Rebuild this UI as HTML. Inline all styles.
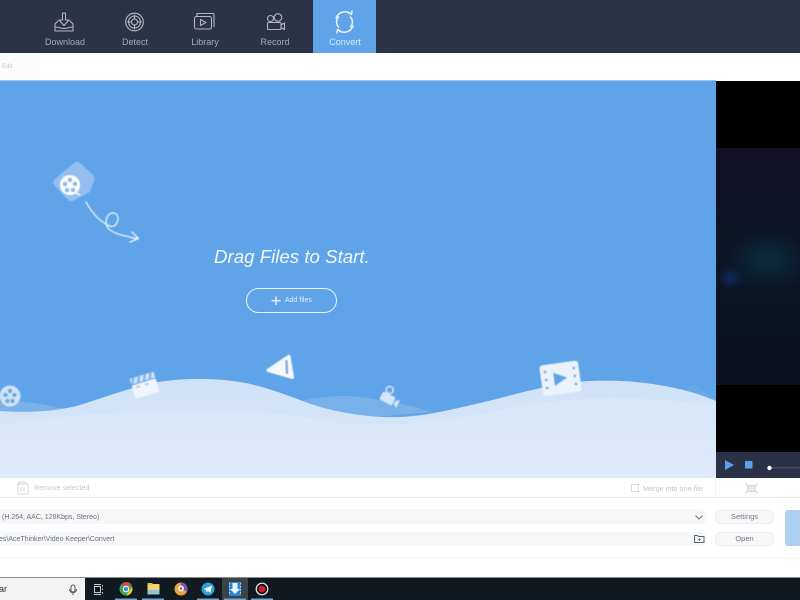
<!DOCTYPE html>
<html>
<head>
<meta charset="utf-8">
<style>
html,body{margin:0;padding:0;width:800px;height:600px;overflow:hidden;background:#fff;font-family:"Liberation Sans",sans-serif}
div{position:absolute;box-sizing:border-box}
.t{white-space:nowrap}
.nav{top:37px;font-size:9px;color:#a6abb8;text-align:center;width:70px;line-height:11px}
svg{position:absolute;left:0;top:0}
</style>
</head>
<body>
<div style="left:0;top:0;width:800px;height:53px;background:#2c3247"></div>
<div style="left:313px;top:0;width:63px;height:53px;background:#5fa4e8"></div>

<div style="left:0;top:53px;width:800px;height:28px;background:#fff"></div>
<div style="left:0;top:53px;width:40px;height:26px;background:#fcfcfc"></div>

<div style="left:0;top:80px;width:716px;height:398px;background:#5fa4e8"></div>
<div style="left:0;top:80px;width:716px;height:1px;background:#9cc2e6"></div>

<div style="left:716px;top:81px;width:84px;height:371px;background:#000"></div>
<div style="left:716px;top:148px;width:84px;height:237px;background:radial-gradient(ellipse 14px 12px at 14px 130px,#102a55 0%,rgba(16,42,85,0) 100%),radial-gradient(ellipse 45px 32px at 52px 112px,#0a2c3e 0%,rgba(10,44,62,0) 100%),linear-gradient(#120f26,#0b1526 45%,#0b0f20)"></div>
<div style="left:716px;top:452px;width:84px;height:26px;background:#2b3146"></div>

<!-- bottom panel -->
<div style="left:0;top:478px;width:800px;height:100px;background:#fff"></div>
<div style="left:0;top:497px;width:800px;height:1px;background:#e9e9e9"></div>
<div style="left:715px;top:478px;width:1px;height:19px;background:#f3f3f3"></div>
<div style="left:0;top:557px;width:800px;height:1px;background:#f5f5f5"></div>
<div style="left:0;top:509px;width:707px;height:15px;background:#f5f7f8;border-radius:0 7px 7px 0"></div>
<div style="left:0;top:532px;width:707px;height:14px;background:#f5f7f8;border-radius:0 7px 7px 0"></div>

<!-- taskbar -->
<div style="left:0;top:577px;width:800px;height:1px;background:#8a8a8a"></div>
<div style="left:85px;top:578px;width:715px;height:22px;background:#111a20"></div>
<div style="left:0;top:578px;width:85px;height:22px;background:#f3f3f3"></div>

<div class="t nav" style="left:30px">Download</div>
<div class="t nav" style="left:100px">Detect</div>
<div class="t nav" style="left:170px">Library</div>
<div class="t nav" style="left:240px">Record</div>
<div class="t nav" style="left:310px;color:#d8e8f8">Convert</div>
<div class="t" style="left:2px;top:63px;font-size:6px;color:#c6c6c6;line-height:8px">Edit</div>

<svg width="800" height="600" viewBox="0 0 800 600">
  <defs>
    <linearGradient id="w" x1="0" y1="0" x2="0" y2="1"><stop offset="0" stop-color="#cfe2f8"/><stop offset="1" stop-color="#dbe9f9"/></linearGradient>
  </defs>
  <!-- nav icons -->
  <g fill="none" stroke="#b3b7c3" stroke-width="1.100" stroke-linecap="round" stroke-linejoin="round">
    <path d="M62.500 13h3v7h3.500l-5 5.500-5-5.500h3.500z"/>
    <path d="M58 21l-3 3v7h18v-7l-3-3M55 27c4 0 5 1.500 9 1.500s5-1.500 9-1.500"/>
    <circle cx="134.500" cy="22" r="8.800"/><circle cx="134.500" cy="22" r="6"/>
    <circle cx="134.500" cy="22" r="3"/>
    <path d="M134.500 15v4M134.500 25v4M127.500 22h4M137.500 22h4"/>
    <rect x="194.500" y="16.500" width="17" height="12.500" rx="2"/>
    <path d="M197 16v-2.500h16q1 0 1 1v12"/><path d="M200.500 19.500l5.500 3-5.500 3z"/>
    <circle cx="270.500" cy="18.500" r="3"/><circle cx="278" cy="17.500" r="3.800"/>
    <rect x="267.500" y="22.500" width="13.500" height="7" rx="1"/><path d="M281 25l3.500-2v6.500l-3.500-2"/>
  </g>
  <!-- convert -->
  <g fill="none" stroke="#e6f1fc" stroke-width="1.500" stroke-linecap="round" stroke-linejoin="round">
    <path d="M336 18a9.500 9.500 0 0 1 15-4"/><path d="M348.500 13l3 1.500 .5-3.500"/>
    <path d="M353 26a9.500 9.500 0 0 1-15 4"/><path d="M340.500 31l-3-1.500-.5 3.500"/>
    <path d="M338.500 17a7.500 7.500 0 0 0 0 10"/><path d="M350.500 27a7.500 7.500 0 0 0 0-10"/>
  </g>

  <!-- waves -->
  <path d="M0 403C15 401 28 402 40 404C52 406 62 409 75 410L0 414Z" fill="#78b1ea"/>
  <path d="M290 404C310 398 335 394 360 397C385 400 410 405 430 412L340 420Z" fill="#78b1ea"/>
  <path d="M680 392L694 384L708 394L716 400L700 400Z" fill="#66a8ea"/>
  <path d="M0 411C25 413 55 412 80 405C110 396 135 385 165 381C190 378 215 378 240 382C270 387 295 399 320 407C345 414 375 418 400 417C425 416 450 410 480 403C515 395 550 383 590 381C630 379 680 385 716 401V478H0Z" fill="url(#w)"/>
  <path d="M0 425C60 416 110 412 160 412C210 412 270 408 330 422C360 428 440 424 500 410C560 396 630 395 716 405V478H0Z" fill="#dfebfa" opacity=".45"/>

  <g style="filter:blur(.4px)">
  <!-- film icon top -->
  <path d="M54 180L74 163Q77 161 80 163L93 175Q95 178 94 181L90 192L73 201Q70 202 68 200L55 186Q52 183 54 180Z" fill="#92bfef"/>
  <circle cx="70" cy="185" r="10" fill="#fff"/>
  <g fill="#92bbe8"><circle cx="70" cy="180" r="2.300"/><circle cx="65" cy="184" r="2.300"/><circle cx="75" cy="184" r="2.300"/><circle cx="67" cy="190" r="2.300"/><circle cx="73" cy="190" r="2.300"/></g>
  <path d="M76 193l4 2" stroke="#fff" stroke-width="1.500" fill="none"/>
  <path d="M86 202C92 213 100 222 110 226C118 229 121 214 114 213C107 212 104 222 108 228C113 234 125 236 138 239M132 232L138.500 238.500L130 242" fill="none" stroke="#eef5fd" stroke-width="1.300" stroke-linecap="round" stroke-linejoin="round"/>

  <!-- film small left -->
  <circle cx="10" cy="396" r="10.500" fill="#cfe2f7"/>
  <g fill="#6fa5dd"><circle cx="10" cy="391" r="2"/><circle cx="5.500" cy="395" r="2"/><circle cx="14.500" cy="395" r="2"/><circle cx="7.500" cy="401" r="2"/><circle cx="12.500" cy="401" r="2"/></g>

  <!-- clapper -->
  <g transform="rotate(-17 144 385)">
    <rect x="132" y="382" width="25" height="14" rx="1" fill="#eef5fc"/>
    <rect x="132" y="375" width="25" height="6" fill="#d3e5f8"/>
    <path d="M136 375l-3 6M142 375l-3 6M148 375l-3 6M154 375l-3 6" stroke="#7fb2e8" stroke-width="2.200"/>
    <path d="M136 385h4M145 385h4" stroke="#a3c7ee" stroke-width="1.500"/>
  </g>

  <!-- triangle -->
  <path d="M267 369L288 355Q290 354 290.500 356L294 377Q294 379 292 379L268 372Q265 371 267 369Z" fill="#f4f8fd"/>
  <path d="M286.500 361l.5 12" stroke="#7fa7d6" stroke-width="2.200" fill="none" stroke-linecap="round"/>

  <!-- camera -->
  <g transform="rotate(28 390 398)">
    <rect x="381" y="395" width="14" height="9" rx="1.500" fill="#d8e7f8"/>
    <circle cx="386" cy="391" r="3.500" fill="none" stroke="#d8e7f8" stroke-width="1.500"/>
    <path d="M396 398l4-3v9l-4-3z" fill="#d8e7f8"/>
  </g>

  <!-- video tile -->
  <g transform="rotate(-8 560 378)">
    <rect x="541" y="363" width="39" height="31" rx="3" fill="#eaf2fc"/>
    <path d="M554 372l13 6.500-13 6.500z" fill="#5fa4e8"/>
    <g fill="#8aa3c4"><circle cx="546" cy="370" r="1.300"/><circle cx="546" cy="378" r="1.300"/><circle cx="546" cy="386" r="1.300"/><circle cx="575" cy="370" r="1.300"/><circle cx="575" cy="378" r="1.300"/><circle cx="575" cy="386" r="1.300"/></g>
  </g>
  </g>

  <!-- plus -->
  <path d="M276 296.500v8.500M271.500 300.800h9" stroke="#fff" stroke-width="1.200" fill="none"/>

  <!-- player controls -->
  <path d="M725 460l9 5-9 5z" fill="#5b9fe6"/>
  <rect x="745" y="461" width="7.500" height="7.500" rx=".5" fill="#5b9fe6"/>
  <rect x="770" y="467" width="30" height="1.500" fill="#454b5e"/>
  <circle cx="769.500" cy="468" r="2.200" fill="#fff"/>

  <!-- trash -->
  <g fill="none" stroke="#d6d8db" stroke-width="1">
    <path d="M17 484h11M19 484v-2h7v2M18 484v10h10v-10M21 487v5M24 487v5"/>
  </g>
  <!-- snapshot -->
  <g fill="none" stroke="#d6d8db" stroke-width="1">
    <path d="M746 483v2h2M757 483v2h-2M746 494v-2h2M757 494v-2h-2"/><rect x="747.500" y="485.500" width="8" height="6" fill="#e7e8ea"/>
  </g>
  <!-- chevron -->
  <path d="M695.500 515.500l3.500 3.500 3.500-3.500" fill="none" stroke="#70757c" stroke-width="1"/>
  <!-- folder -->
  <path d="M694.500 542.500v-7h3l1 1h5.500v6z" fill="none" stroke="#60656c" stroke-width="1"/>
  <path d="M699.300 538v3M697.800 539.500h3" stroke="#60656c" stroke-width=".8"/>
  <!-- mic -->
  <rect x="71" y="585" width="4" height="7" rx="2" fill="none" stroke="#555" stroke-width="1"/>
  <path d="M69.500 589c0 5 7 5 7 0M73 593v2" fill="none" stroke="#555" stroke-width="1"/>

  <!-- taskview -->
  <g fill="none" stroke="#c8ccd0" stroke-width="1"><rect x="94.500" y="586.500" width="6" height="6"/><path d="M94 584.500h7M94 594.500h7"/><path d="M102.500 585v1.500M102.500 588.500v1.500M102.500 592v1.500"/></g>
  <!-- chrome -->
  <circle cx="126" cy="589" r="6.500" fill="#3aa655"/>
  <path d="M120.800 585a6.500 6.500 0 0 1 11.200 .5h-6z" fill="#dd4a3b"/>
  <path d="M132.200 587a6.500 6.500 0 0 1-6 8.500l3-5z" fill="#f2c230"/>
  <circle cx="126" cy="589" r="2.800" fill="#3f88e6" stroke="#fff" stroke-width="1"/>
  <!-- files -->
  <rect x="147.500" y="584" width="12" height="10.500" rx=".5" fill="#f2d273"/>
  <rect x="147.500" y="590" width="12" height="4.500" fill="#8ec6d8"/>
  <rect x="147.500" y="583" width="5" height="2" fill="#e9c153"/>
  <!-- browser orange -->
  <circle cx="181" cy="589" r="6.500" fill="#e8a33a"/>
  <path d="M181 582.500a6.500 6.500 0 0 1 6 9l-6-2.500z" fill="#7a52b8"/>
  <circle cx="181" cy="588.500" r="3" fill="#f6f0e6"/>
  <circle cx="181" cy="588.500" r="1.200" fill="#6a4aa8"/>
  <!-- telegram -->
  <circle cx="208" cy="589" r="6.500" fill="#2f9edb"/>
  <path d="M203.500 589l8.500-3.500-1.500 7.500-2.500-2-1.500 1.500-.5-2.500z" fill="#eef7fc"/>
  <!-- active app -->
  <rect x="222" y="578" width="26" height="22" fill="#3c4347"/>
  <rect x="229" y="582" width="12" height="14" fill="#2b86d8"/>
  <path d="M232.500 583h5v6h2.500l-5 5-5-5h2.500z" fill="#eaf4fd"/>
  <path d="M229.500 583v12M240.500 583v12" stroke="#bcd9f2" stroke-width="1" stroke-dasharray="1.500 1.500"/>
  <!-- record -->
  <circle cx="262" cy="589" r="5.800" fill="#1a1a1a" stroke="#e8e8e8" stroke-width="1.200"/>
  <circle cx="262" cy="589" r="3.300" fill="#d3202b"/>
  <!-- underlines -->
  <g fill="#6fa9d4"><rect x="115" y="598.500" width="22" height="1.500"/><rect x="142" y="598.500" width="22" height="1.500"/><rect x="197" y="598.500" width="22" height="1.500"/><rect x="224" y="598.500" width="22" height="1.500"/><rect x="251" y="598.500" width="22" height="1.500"/></g>
</svg>

<div class="t" style="left:214px;top:245px;font-size:18.700px;line-height:24px;color:#f2f7fd;font-style:italic">Drag Files to Start.</div>
<div style="left:246px;top:288px;width:91px;height:25px;border:1.500px solid #eaf3fc;border-radius:13px"></div>
<div class="t" style="left:285px;top:296px;font-size:7px;line-height:10px;color:#e6f0fb">Add files</div>

<div class="t" style="left:34px;top:484px;font-size:7px;line-height:10px;color:#c4c6c9;letter-spacing:.1px">Remove selected</div>
<div style="left:631px;top:484px;width:8px;height:8px;border:1px solid #dcdcdc;background:#fff"></div>
<div class="t" style="left:643px;top:484px;font-size:7.300px;line-height:10px;color:#c4c6c9">Merge into one file</div>

<div class="t" style="left:2px;top:513px;font-size:7px;line-height:10px;color:#6c7076">(H.264; AAC, 128Kbps, Stereo)</div>
<div class="t" style="left:-1px;top:535px;font-size:7px;line-height:10px;color:#6c7076">es\AceThinker\Video Keeper\Convert</div>

<div class="t" style="left:715px;top:510px;width:59px;height:14px;background:#f6f7f8;border:1px solid #eceef0;border-radius:5px;font-size:7.500px;line-height:12px;text-align:center;color:#777b80">Settings</div>
<div class="t" style="left:715px;top:532px;width:59px;height:14px;background:#f6f7f8;border:1px solid #eceef0;border-radius:5px;font-size:7.500px;line-height:12px;text-align:center;color:#777b80">Open</div>
<div style="left:785px;top:510px;width:15px;height:36px;background:#aecff2;border-radius:3px 0 0 3px"></div>

<div class="t" style="left:-1px;top:584px;font-size:9px;line-height:11px;color:#333">ar</div>
</body>
</html>
